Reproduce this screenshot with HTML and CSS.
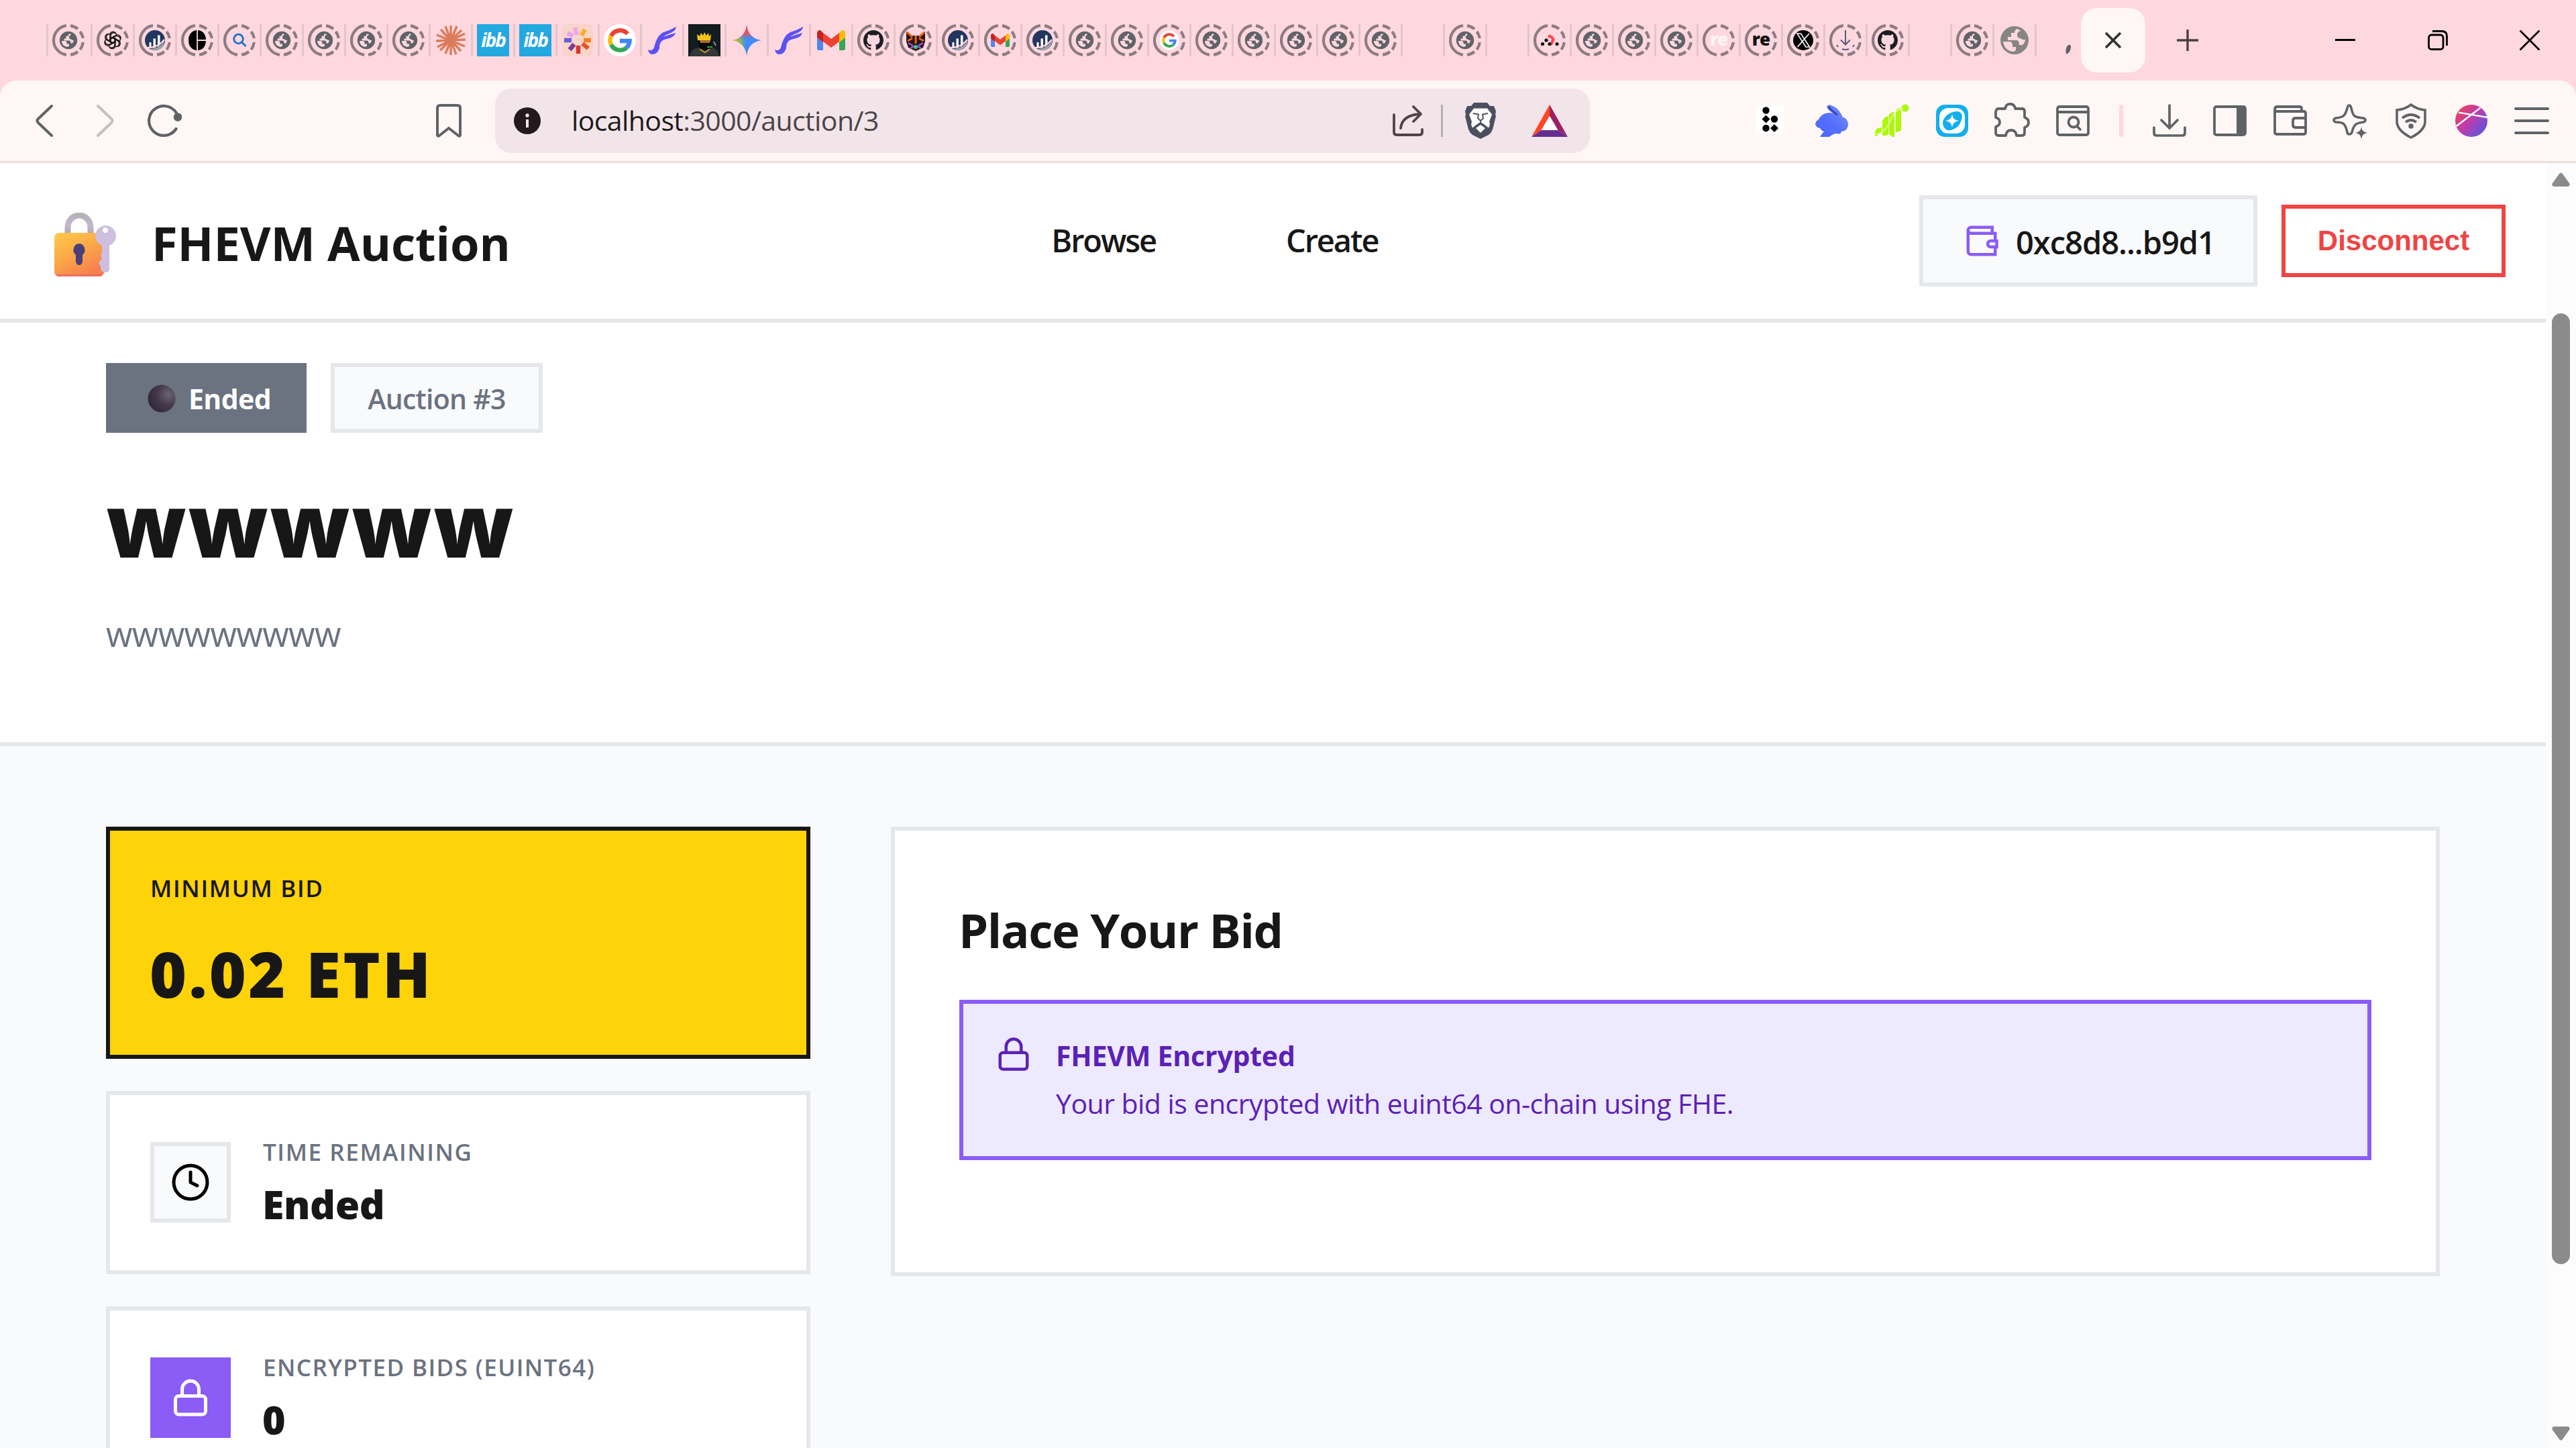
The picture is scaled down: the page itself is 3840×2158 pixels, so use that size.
FILE: index.html
```html
<!DOCTYPE html>
<html lang="en">
<head>
<meta charset="utf-8">
<title>FHEVM Auction</title>
<link rel="stylesheet" href="styles.css">
</head>
<body>
<svg class="defs" width="0" height="0" aria-hidden="true">
  <defs>
    <linearGradient id="lockBody" x1="0" y1="0" x2=".6" y2="1"><stop offset="0" stop-color="#ffcb4d"/><stop offset=".45" stop-color="#fbae46"/><stop offset="1" stop-color="#f6804f"/></linearGradient>
    <linearGradient id="shackle" x1="0" y1="0" x2="0" y2="1"><stop offset="0" stop-color="#b5b2b8"/><stop offset=".5" stop-color="#c3b8cc"/><stop offset="1" stop-color="#a9a6ac"/></linearGradient>
    <linearGradient id="gem" x1="0" y1="0" x2="1" y2="0"><stop offset="0" stop-color="#fbc02d"/><stop offset=".28" stop-color="#8fb35e"/><stop offset=".48" stop-color="#3c8df5"/><stop offset="1" stop-color="#4a8bff"/></linearGradient>
    <linearGradient id="gemTop" x1="0" y1="0" x2="0" y2="1"><stop offset="0" stop-color="#ff4641"/><stop offset=".28" stop-color="#f0505a" stop-opacity=".9"/><stop offset=".5" stop-color="#3186ff" stop-opacity="0"/><stop offset=".72" stop-color="#3186ff" stop-opacity="0"/><stop offset="1" stop-color="#14bb69"/></linearGradient>
    <linearGradient id="orbFill" x1="0" y1=".1" x2="1" y2=".9"><stop offset="0" stop-color="#f0474c"/><stop offset=".45" stop-color="#c13bab"/><stop offset="1" stop-color="#4f5ae0"/></linearGradient>
    <linearGradient id="rabbitFill" x1="0" y1="1" x2="1" y2="0"><stop offset="0" stop-color="#4c66ff"/><stop offset=".5" stop-color="#5570fb"/><stop offset="1" stop-color="#8193fb"/></linearGradient>
    <radialGradient id="moon" cx=".75" cy=".35" r=".8"><stop offset="0" stop-color="#6d6473"/><stop offset=".5" stop-color="#443a4b"/><stop offset="1" stop-color="#2f2738"/></radialGradient>
  </defs>
  <symbol id="ring" viewBox="0 0 48 48"><path d="M21 2.200A22 22 0 0 0 21 45.800M27 2.300Q33 3 38 7M41.500 11Q45 16 45.800 21M45.800 27Q45 33 41.500 38M38 41Q33 45 27 45.700" fill="none" stroke="#8d7c81" stroke-width="4.200"/></symbol>
  <symbol id="globe" viewBox="0 0 48 48"><use href="#ring"/><circle cx="24" cy="24" r="13.200" fill="#5f6368"/><path d="M13.800 25h4.700q3 0 3 3v1.500h3.500v3q-1.500 1.500-4 1.200-6.700-2-7.200-8.700zM26 14q-2.500 1-2.500 3.800h-3v3.700h-3v3h7.500q2.500 0 2.500 4h2.500q2-2.500 2-4.500-2 .5-4-1.500-3 0-3-3 0-3 3-3.500-1-1.500-2-2z" fill="#ffd7df"/></symbol>
  <symbol id="globe-plain" viewBox="0 0 48 48"><circle cx="24" cy="24" r="21" fill="#858585"/><path d="M7 26h9q5 0 5 5v3h5v5q-2 2-5 2-12-2-14-15zM27 7q-3 2-3 6h-5v6h-5v5h13q4 0 4 7h5q4-4 4-8-4 1-7-2-5 0-5-5 0-5 5-6-3-3-6-3z" fill="#ffd7df"/></symbol>
  <symbol id="gpt" viewBox="0 0 48 48"><use href="#ring"/><g fill="none" stroke="#111" stroke-width="1.400"><path id="petal" d="M21 28v-10.500a4.800 4.800 0 0 1 9-2.200M21 21l8.500-4.800a4.800 4.800 0 0 1 6 6.500"/><use href="#petal" transform="rotate(60 24 24)"/><use href="#petal" transform="rotate(120 24 24)"/><use href="#petal" transform="rotate(180 24 24)"/><use href="#petal" transform="rotate(240 24 24)"/><use href="#petal" transform="rotate(300 24 24)"/></g></symbol>
  <symbol id="chart" viewBox="0 0 48 48"><use href="#ring"/><circle cx="24" cy="24" r="15" fill="#22365f"/><path d="M15 37q16 0 23.500-13-1 14-14.500 15-5 0-9-2z" fill="#9da1a6"/><path d="M15.500 35v-8h3v8.500M21.500 36V21.500h3.500V35M28 34V16.500h3.500V31" fill="#fff"/><path d="M13 35q16 0 25-12" fill="none" stroke="#ffd7df" stroke-width="2.200"/></symbol>
  <symbol id="blackc" viewBox="0 0 48 48"><use href="#ring"/><path d="M23.200 9v30a13 13 0 0 1-12-13v-4a13 13 0 0 1 12-13zM25 9q11 1 12 14H25zM25 25h12q-1 13-12 14z" fill="#000"/></symbol>
  <symbol id="search" viewBox="0 0 48 48"><use href="#ring"/><circle cx="22.500" cy="22" r="6.800" fill="none" stroke="#1a73c8" stroke-width="2.800"/><path d="M27.500 27l6 6" stroke="#1a73c8" stroke-width="3"/></symbol>
  <symbol id="claude" viewBox="0 0 48 48"><path d="M24 2v44M2 25l44-2M9 8l30 32M40 9L8 39M16 3l16 42M33 3L16 44M3 16l42 17M45 14L4 34" stroke="#dc7b5b" stroke-width="3.400"/></symbol>
  <symbol id="swirl" viewBox="0 0 48 48"><rect x="1" width="46" height="48" rx="8" fill="#f7d5c8"/><g stroke-width="6.500"><path d="M23 16l-3-11" stroke="#f2a6e8"/><path d="M30 17l5-9" stroke="#fbae2c"/><path d="M33 24h11" stroke="#f58220"/><path d="M31 29l9 7" stroke="#e8542c"/><path d="M25 32v12" stroke="#d7372f"/><path d="M19 30l-7 8" stroke="#7d3c91"/><path d="M15 24H4" stroke="#6a5ae0"/><path d="M17 18l-8-5" stroke="#e9a0f0"/></g></symbol>
  <symbol id="gmark" viewBox="0 0 48 48"><g fill="none" stroke-width="6.500"><path d="M35.500 14.500A14.800 14.800 0 0 0 11 17.500" stroke="#ea4335"/><path d="M11 17.500a14.800 14.800 0 0 0 0 13" stroke="#fbbc05"/><path d="M11 30.500a14.800 14.800 0 0 0 22.500 5" stroke="#34a853"/><path d="M33.500 35.500A14.800 14.800 0 0 0 38.500 25H24" stroke="#4285f4"/></g></symbol>
  <symbol id="google" viewBox="0 0 48 48"><circle cx="24" cy="24" r="24" fill="#fff"/><use href="#gmark"/></symbol>
  <symbol id="google-ring" viewBox="0 0 48 48"><use href="#ring"/><use href="#google" x="9.500" y="9.500" width="29" height="29"/></symbol>
  <symbol id="flame" viewBox="0 0 48 48"><path d="M3 38q6 3 9-3 4-18 14-23Q36 9 45 4q0 5-8 9-8 3-11 6 10-4 18-6-1 5-9 8-6 1-10 3-5 3-5 12Q17 45 9 45q-5-1-6-7z" fill="#5b52f0"/></symbol>
  <symbol id="avatar" viewBox="0 0 48 48"><path d="M0 0h48v48H0z" fill="#131c1f"/><path d="M2 48q2-12 14-13l8 4 8-5q13 2 14 14z" fill="#34383a"/><path d="M14 24h20v12l-8 7-9-6z" fill="#08090a"/><path d="M17 24h16l-1 4H18z" fill="#a9683c"/><path d="M13 15l4 3 2-5 3 4 2-5 3 5 3-4 1 5 3-3-1 9H14z" fill="#f5c518"/><path d="M17 37l8 5 7-5" fill="none" stroke="#c9a42c" stroke-width="2"/><path d="M28 34h8" stroke="#35a04a" stroke-width="2"/><path d="M38 26l3 6" stroke="#8d9396" stroke-width="2"/></symbol>
  <symbol id="gemini" viewBox="0 0 48 48"><path d="M24 2q3 19 22 22-19 3-22 22Q21 27 2 24 21 21 24 2z" fill="url(#gem)"/><path d="M24 2q3 19 22 22-19 3-22 22Q21 27 2 24 21 21 24 2z" fill="url(#gemTop)"/></symbol>
  <symbol id="gmailmark" viewBox="0 0 48 48"><path d="M3 13v23q0 3 3 3h6V20z" fill="#4f86f0"/><path d="M45 13v23q0 3-3 3h-6V20z" fill="#34a853"/><path d="M36 13l4-4q5 0 5 5v6l-9 7z" fill="#fbbc04"/><path d="M12 13L8 9q-5 0-5 5v6l9 7z" fill="#c5221f"/><path d="M12 13l12 9 12-9v13l-12 9-12-9z" fill="#ea4335"/></symbol>
  <symbol id="gmail-ring" viewBox="0 0 48 48"><use href="#ring"/><use href="#gmailmark" x="8" y="8" width="32" height="32"/></symbol>
  <symbol id="github" viewBox="0 0 48 48"><use href="#ring"/><path transform="translate(9 9) scale(1.875)" fill="#1b1f23" d="M8 0C3.580 0 0 3.580 0 8c0 3.540 2.290 6.530 5.470 7.590.400.070.550-.170.550-.380 0-.190-.010-.820-.010-1.490-2.010.370-2.530-.490-2.690-.940-.090-.230-.480-.940-.820-1.130-.280-.150-.680-.520-.010-.530.630-.010 1.080.580 1.230.820.720 1.210 1.870.870 2.330.660.070-.520.280-.870.510-1.070-1.780-.200-3.640-.890-3.640-3.950 0-.870.310-1.590.820-2.150-.080-.200-.360-1.020.080-2.120 0 0 .670-.210 2.200.820.640-.180 1.320-.270 2-.270s1.360.090 2 .270c1.530-1.040 2.200-.820 2.200-.820.440 1.100.160 1.920.080 2.120.510.560.820 1.270.820 2.150 0 3.070-1.870 3.750-3.650 3.950.290.250.540.730.540 1.480 0 1.070-.010 1.930-.010 2.200 0 .210.150.460.550.380A8.010 8.010 0 0 0 16 8c0-4.420-3.580-8-8-8z"/></symbol>
  <symbol id="fox" viewBox="0 0 48 48"><use href="#ring"/><path d="M10 11l8 6h12l8-6v15l-3 9-11 5-11-5-3-9z" fill="#27151c"/><path d="M11 12l8 7M37 12l-8 7M19 21l-7 4M29 21l7 4M24 17v12" stroke="#e8641b" stroke-width="3"/><path d="M13 28l7 4M35 28l-7 4M16 36l5-3M32 36l-5-3" stroke="#a457e0" stroke-width="2.200"/><circle cx="24" cy="34" r="3" fill="#4bbf8a"/></symbol>
  <symbol id="dots" viewBox="0 0 48 48"><use href="#ring"/><path d="M23 17h5l4 6-4 8h-4l3-8z" fill="#ff4757"/><circle cx="24" cy="18" r="2.500" fill="#ff4757"/><g fill="#111"><circle cx="19" cy="24" r="2.600"/><circle cx="13.500" cy="29.500" r="2.600"/><circle cx="24" cy="29.500" r="2.600"/><circle cx="35" cy="29.500" r="2.600"/></g></symbol>
  <symbol id="xlogo" viewBox="0 0 48 48"><use href="#ring"/><circle cx="24" cy="24" r="15" fill="#000"/><path d="M15 14h5.500l13 20H28zM33 14L15.500 34" fill="none" stroke="#fff" stroke-width="1.600"/></symbol>
  <symbol id="downring" viewBox="0 0 48 48"><use href="#ring"/><path d="M24 9v21M17 23.500l7 7 7-7M19 37q5 2 10 0M11 31l2 3M37 31l-2 3" fill="none" stroke="#56597a" stroke-width="2"/></symbol>
  <symbol id="lock" viewBox="0 0 24 24"><g fill="none" stroke="currentColor" stroke-width="2" stroke-linecap="round" stroke-linejoin="round"><rect x="3" y="11" width="18" height="11" rx="2"/><path d="M7 11V7a5 5 0 0 1 10 0v4"/></g></symbol>
</svg>

<div class="tabstrip">
  <div class="slot slot-first"><svg><use href="#globe"/></svg></div>
  <div class="slot"><svg><use href="#gpt"/></svg></div>
  <div class="slot"><svg><use href="#chart"/></svg></div>
  <div class="slot"><svg><use href="#blackc"/></svg></div>
  <div class="slot"><svg><use href="#search"/></svg></div>
  <div class="slot"><svg><use href="#globe"/></svg></div>
  <div class="slot"><svg><use href="#globe"/></svg></div>
  <div class="slot"><svg><use href="#globe"/></svg></div>
  <div class="slot"><svg><use href="#globe"/></svg></div>
  <div class="slot"><svg><use href="#claude"/></svg></div>
  <div class="slot"><div class="ibb">ibb</div></div>
  <div class="slot"><div class="ibb">ibb</div></div>
  <div class="slot"><svg><use href="#swirl"/></svg></div>
  <div class="slot"><svg><use href="#google"/></svg></div>
  <div class="slot"><svg><use href="#flame"/></svg></div>
  <div class="slot"><svg><use href="#avatar"/></svg></div>
  <div class="slot"><svg><use href="#gemini"/></svg></div>
  <div class="slot"><svg><use href="#flame"/></svg></div>
  <div class="slot"><svg><use href="#gmailmark"/></svg></div>
  <div class="slot"><svg><use href="#github"/></svg></div>
  <div class="slot"><svg><use href="#fox"/></svg></div>
  <div class="slot"><svg><use href="#chart"/></svg></div>
  <div class="slot"><svg><use href="#gmail-ring"/></svg></div>
  <div class="slot"><svg><use href="#chart"/></svg></div>
  <div class="slot"><svg><use href="#globe"/></svg></div>
  <div class="slot"><svg><use href="#globe"/></svg></div>
  <div class="slot"><svg><use href="#google-ring"/></svg></div>
  <div class="slot"><svg><use href="#globe"/></svg></div>
  <div class="slot"><svg><use href="#globe"/></svg></div>
  <div class="slot"><svg><use href="#globe"/></svg></div>
  <div class="slot"><svg><use href="#globe"/></svg></div>
  <div class="slot"><svg><use href="#globe"/></svg></div>
  <div class="slot"></div>
  <div class="slot"><svg><use href="#globe"/></svg></div>
  <div class="slot"></div>
  <div class="slot"><svg><use href="#dots"/></svg></div>
  <div class="slot"><svg><use href="#globe"/></svg></div>
  <div class="slot"><svg><use href="#globe"/></svg></div>
  <div class="slot"><svg><use href="#globe"/></svg></div>
  <div class="slot"><div class="re re-light"><svg><use href="#ring"/></svg><span>re</span></div></div>
  <div class="slot"><div class="re"><svg><use href="#ring"/></svg><span>re</span></div></div>
  <div class="slot"><svg><use href="#xlogo"/></svg></div>
  <div class="slot"><svg><use href="#downring"/></svg></div>
  <div class="slot"><svg><use href="#github"/></svg></div>
  <div class="slot"></div>
  <div class="slot"><svg><use href="#globe"/></svg></div>
  <div class="slot"><svg><use href="#globe-plain"/></svg></div>
  <div class="slot"><svg viewBox="0 0 48 48"><path d="M38 36q2-6 6-5 2 2 0 8-3 6-6 5-1-3 0-8z" fill="#5f6368"/></svg></div>
  <div class="tab-active"><svg viewBox="0 0 24 24"><path d="M1 1l22 22M23 1L1 23" stroke="#2f3134" stroke-width="3.600"/></svg></div>
  <svg class="tab-new" viewBox="0 0 32 32"><path d="M16 0v32M0 16h32" stroke="#4a4044" stroke-width="3.400"/></svg>
  <div class="winbtns">
    <div class="winbtn"><svg viewBox="0 0 30 30"><path d="M0 14.500h30" stroke="#000" stroke-width="3"/></svg></div>
    <div class="winbtn"><svg viewBox="0 0 30 30"><g fill="none" stroke="#000" stroke-width="2.800"><rect x="1.500" y="7" width="21.500" height="21.500" rx="4"/><path d="M7 1.500h14q7.500 0 7.500 7.500v14"/></g></svg></div>
    <div class="winbtn"><svg viewBox="0 0 30 30"><path d="M.500.500l29 29M29.500.500l-29 29" stroke="#000" stroke-width="2.800"/></svg></div>
  </div>
</div>

<div class="toolbar">
  <div class="tool"><svg viewBox="0 0 54 54"><path d="M38 5L18 24q-3 3 0 6l20 19" fill="none" stroke="#5f6368" stroke-width="4" stroke-linecap="round"/></svg></div>
  <div class="tool"><svg viewBox="0 0 54 54"><path d="M17 5l20 19q3 3 0 6L17 49" fill="none" stroke="#c3c0c1" stroke-width="4" stroke-linecap="round"/></svg></div>
  <div class="tool"><svg viewBox="0 0 54 54"><path d="M43.500 39A22 22 0 1 1 46 20" fill="none" stroke="#5f6368" stroke-width="4.200" stroke-linecap="round"/><circle cx="46" cy="21.500" r="6.300" fill="#5f6368"/></svg></div>
  <div class="tool tool-bookmark"><svg viewBox="0 0 54 54"><path d="M14 4h26q4 0 4 4v40q0 3-3 1L27 38 13 49q-3 2-3-1V8q0-4 4-4z" fill="none" stroke="#5f6368" stroke-width="4"/></svg></div>
  <div class="urlbar">
    <svg class="url-info" viewBox="0 0 40 40"><circle cx="20" cy="20" r="20" fill="#231a1c"/><circle cx="20" cy="12" r="2.700" fill="#f2e5ea"/><path d="M20 18v12" stroke="#f2e5ea" stroke-width="4"/></svg>
    <span class="url-text"><span class="url-host">localhost</span>:3000/auction/3</span>
    <svg class="url-share" viewBox="0 0 46 46"><path d="M2 14v26q0 4 4 4h34q4 0 4-4v-4M12 34q2-20 30-21M31 2l11 11-11 11" fill="none" stroke="#524347" stroke-width="3.800" stroke-linecap="round" stroke-linejoin="round"/></svg>
    <span class="url-sep"></span>
    <svg class="url-brave" viewBox="0 0 48 54"><path d="M14 0h20l4 5h6l3 8-1 5 1 2-5 20q-2 5-6 8l-12 6-12-6q-4-3-6-8L1 20l1-2-1-5 3-8h6z" fill="#4c4f60"/><path d="M14 8.500h20l7 9-4 11q2 4-1 9l-7-5.500-5-3-5 3-7 5.500q-3-5-1-9l-4-11z" fill="#fff"/><path d="M24 33l7 5-7 7-7-7z" fill="#fff"/><path d="M13 16l8 1.500-1 6 4 3.500 4-3.500-1-6 8-1.500M24 27v3.500l-6 4M24 30.500l6 4" fill="none" stroke="#4c4f60" stroke-width="1.900"/></svg>
    <svg class="url-bat" viewBox="0 0 54 48"><path d="M27 0L0 48l14.500-10L27 17z" fill="#ff4724"/><path d="M27 0l27 48-14.500-10L27 17z" fill="#9e1f63"/><path d="M0 48h54L39.500 38h-25z" fill="#662d91"/><path d="M27 17l12.500 21h-25z" fill="#fff"/></svg>
  </div>
  <div class="tools">
    <div class="tool"><svg viewBox="0 0 54 54"><rect x="5" y="4" width="42" height="42" rx="6" fill="#fff"/><g fill="#000"><circle cx="19.500" cy="11.500" r="5.200"/><path d="M19.500 18.500l6 6-6 6-6-6z"/><circle cx="32" cy="24.500" r="5.200"/><circle cx="19.500" cy="38" r="5.200"/><path d="M32 32l6 6-6 6-6-6z"/></g></svg></div>
    <div class="tool"><svg viewBox="0 0 54 54"><path d="M20 6q2-4 7-2 9 3 14 12 3 4 2 5 8 2 9 11 0 10-10 11-1 5-7 3-5 0-11 5H10q3-5 6-8-4-1-6-5-6-1-7-6 1-5 5-7 5-10 16-10 5 0 9 2-11-4-13-11z" fill="url(#rabbitFill)"/><path d="M23 6q5 7 13 12" stroke="#2f42b8" stroke-width="3" fill="none"/></svg></div>
    <div class="tool"><svg viewBox="0 0 54 54"><g fill="#acf806"><path d="M2 50v-6q1-7 10-7v6l-7 7zM13 27q3-6 9-7v27q-3 3-9 2z"/><path d="M23 18q3-4 8-4v37h-3l-5-4zM33 11q3-3 8-3v33q-3 3-8 3z"/><circle cx="47" cy="8" r="5.500"/></g><path d="M3 48q17-5 24-26 5-12 17-13" fill="none" stroke="#e9ffb5" stroke-width="1.500"/></svg></div>
    <div class="tool"><svg viewBox="0 0 54 54"><rect x="3" y="3" width="48" height="48" rx="13" fill="#12aeef"/><rect x="8" y="8" width="38" height="38" rx="13" fill="#fff"/><path d="M15 37q-5-8 2-16t18-8q6 1 7 7-1 9-6 15-8 7-16 6-3-1-5-4z" fill="#12aeef"/><path d="M27 17q1 9 10 10-9 1-10 10-1-9-10-10 9-1 10-10z" fill="#fff"/></svg></div>
    <div class="tool"><svg viewBox="0 0 54 54"><path d="M6 9h10q1-7 7.500-7T31 9h10q4 0 4 4v9q6 2 6 7.500t-6 7.500v8q0 4-4 4h-8q-1-8-8-8t-8 8H6q-4 0-4-4v-9q6-2 6-7t-6-7v-7q0-6 4-6z" fill="none" stroke="#5f6368" stroke-width="3.800" stroke-linejoin="round"/></svg></div>
    <div class="tool"><svg viewBox="0 0 54 54"><g fill="none" stroke="#5f6368" stroke-width="3.800"><rect x="4" y="6" width="46" height="42" rx="3"/><path d="M4 14h46"/><circle cx="28" cy="29" r="7.500"/><path d="M33 35l6 6"/></g></svg></div>
    <span class="tool-sep"></span>
    <div class="tool"><svg viewBox="0 0 54 54"><path d="M4 37v8q0 4 4 4h38q4 0 4-4v-8M27 4v33M15 26l12 12 12-12" fill="none" stroke="#5f6368" stroke-width="3.700" stroke-linecap="round"/></svg></div>
    <div class="tool"><svg viewBox="0 0 54 54"><rect x="4" y="6" width="46" height="42" rx="3" fill="none" stroke="#5f6368" stroke-width="3.800"/><path d="M37 5h12v44H37z" fill="#5f6368"/></svg></div>
    <div class="tool"><svg viewBox="0 0 54 54"><g fill="none" stroke="#5f6368" stroke-width="3.800" stroke-linejoin="round"><path d="M4 10v34q0 3 3 3h40q3 0 3-3V16q0-3-3-3H7q-3 0-3-3 0-4 4-4h33q3 0 3 3v4"/><path d="M50 23H35q-4 0-4 4v6q0 4 4 4h15"/></g></svg></div>
    <div class="tool"><svg viewBox="0 0 54 54"><path d="M25 4q2 0 3 4 2 10 5 12t13 3q3 1 3 3t-3 3q-9 1-12 4t-5 11q-1 3-4 3t-3-3q-2-9-5-12T5 29q-3-1-3-3t3-3q9-1 12-4t5-11q1-4 3-4z" fill="none" stroke="#5f6368" stroke-width="3.600"/><path d="M43 36q1 8 9 9-8 1-9 9-1-8-9-9 8-1 9-9z" fill="#5f6368"/></svg></div>
    <div class="tool"><svg viewBox="0 0 54 54"><path d="M27 3q9 7 21 8v18q-1 13-21 23Q7 42 6 29V11q12-1 21-8z" fill="none" stroke="#5f6368" stroke-width="3.600"/><path d="M14 23q13-10 26 0M19 29q8-6 16 0" fill="none" stroke="#5f6368" stroke-width="4"/><circle cx="27" cy="35" r="3.800" fill="#5f6368"/></svg></div>
    <div class="tool"><svg viewBox="0 0 54 54"><circle cx="27" cy="27" r="24" fill="url(#orbFill)"/><path d="M4 33L42 9M9 13l42 11" stroke="#fff" stroke-width="2.400" transform="rotate(-5 27 27)"/></svg></div>
    <div class="tool"><svg viewBox="0 0 54 54"><path d="M3 9h48M3 27h48M3 45h48" stroke="#5f6368" stroke-width="4" stroke-linecap="round"/></svg></div>
  </div>
</div>

<div class="viewport">
  <div class="page">
    <header class="header">
      <div class="brand">
        <svg class="brand-icon" viewBox="0 0 93 96">
          <path d="M20 34V22a17 18 0 0 1 34 0v12" fill="none" stroke="url(#shackle)" stroke-width="9"/>
          <rect x="0" y="30" width="74" height="65" rx="7" fill="url(#lockBody)"/>
          <path d="M2 92h66q4 0 5-5v2q-1 6-6 6H7q-4 0-5-3z" fill="#ee6f5e"/>
          <path d="M37 46a9 9.500 0 0 1 5 17v10q-1 5-5 5t-5-5V63a9 9.500 0 0 1 5-17z" fill="#4b3f78"/>
          <path d="M66 74l5-5-2-6 2-4V49a15.500 15.500 0 1 1 11 0v36q-1 4-6 4-8-1-7-8z" fill="#cdbfdd"/>
          <circle cx="76" cy="26" r="4" fill="#fff"/>
        </svg>
        <span class="brand-name">FHEVM Auction</span>
      </div>
      <nav class="nav"><a>Browse</a><a>Create</a></nav>
      <div class="account">
        <div class="wallet">
          <svg viewBox="0 0 24 24"><g fill="none" stroke="#8b5cf6" stroke-width="2"><path d="M21 12V7H5a2 2 0 0 1 0-4h14v4"/><path d="M3 5v14a2 2 0 0 0 2 2h16v-5"/><path d="M18 12a2 2 0 0 0 0 4h4v-4Z"/></g></svg>
          <span>0xc8d8...b9d1</span>
        </div>
        <button class="disconnect">Disconnect</button>
      </div>
    </header>

    <section class="hero">
      <div class="badges">
        <div class="badge-ended"><svg viewBox="0 0 42 42"><circle cx="21" cy="21" r="20.500" fill="url(#moon)"/></svg><span>Ended</span></div>
        <div class="badge-id">Auction #3</div>
      </div>
      <h1 class="title">wwwww</h1>
      <p class="desc">wwwwwwwww</p>
    </section>

    <main class="content">
      <aside class="stats">
        <div class="card-min">
          <div class="label label-dark">MINIMUM BID</div>
          <div class="min-value">0.02 ETH</div>
        </div>
        <div class="stat">
          <div class="stat-icon"><svg viewBox="0 0 24 24"><g fill="none" stroke="#000" stroke-width="2" stroke-linecap="round" stroke-linejoin="round"><circle cx="12" cy="12" r="10"/><path d="M12 6v6l4 2"/></g></svg></div>
          <div><div class="label label-time">TIME REMAINING</div><div class="stat-value">Ended</div></div>
        </div>
        <div class="stat">
          <div class="stat-icon stat-icon-violet"><svg><use href="#lock"/></svg></div>
          <div><div class="label">ENCRYPTED BIDS (EUINT64)</div><div class="stat-value">0</div></div>
        </div>
      </aside>
      <section class="bid">
        <h2 class="bid-title">Place Your Bid</h2>
        <div class="notice">
          <svg><use href="#lock"/></svg>
          <div><div class="notice-title">FHEVM Encrypted</div><div class="notice-text">Your bid is encrypted with euint64 on-chain using FHE.</div></div>
        </div>
      </section>
    </main>
  </div>
  <div class="scrollbar">
    <svg viewBox="0 0 27 21"><path d="M11 2q2.500-3 5 0l10 14q2 4-2 5H3q-4-1-2-5z" fill="#8b8b8b"/></svg>
    <div class="thumb"></div>
    <svg viewBox="0 0 27 21"><path d="M11 19q2.500 3 5 0L26 5q2-4-2-5H3q-4 1-2 5z" fill="#8b8b8b"/></svg>
  </div>
</div>
</body>
</html>
```
FILE: styles.css
```css
* { box-sizing: border-box; }
body { margin: 0; height: 2158px; overflow: hidden; display: flex; flex-direction: column; font-family: "Open Sans", "Noto Sans", sans-serif; color: #171717; background: #ffd7df; }
svg { display: block; flex: none; }
.defs { position: absolute; }

/* Browser tab strip */
.tabstrip { height: 120px; flex: none; display: flex; align-items: center; padding-left: 69px; }
.slot { width: 63px; height: 48px; flex: none; padding-left: 6px; border-left: 3px solid #e2c6cb; }
.slot-first { width: 66px; }
.slot svg { width: 48px; height: 48px; }
.ibb { width: 48px; height: 48px; background: #23a8e0; color: #fff; text-align: center; font: italic 700 28px/46px "Open Sans", sans-serif; letter-spacing: -2px; }
.re { display: grid; width: 48px; height: 48px; color: #111; font: 800 26px/44px "Open Sans", sans-serif; letter-spacing: -1px; text-align: center; }
.re svg, .re span { grid-area: 1 / 1; }
.re-light { color: #fff4f6; }
.tab-active { width: 96px; height: 96px; margin-left: 6px; border-radius: 24px; background: #fff7f5; display: flex; align-items: center; justify-content: center; }
.tab-active svg { width: 24px; height: 24px; }
.tab-new { width: 32px; height: 32px; margin-left: 47px; }
.winbtns { display: flex; margin-left: auto; }
.winbtn { width: 137.5px; display: flex; justify-content: center; }
.winbtn svg { width: 30px; height: 30px; }

/* Browser toolbar */
.toolbar { height: 123px; flex: none; display: flex; align-items: center; padding-left: 21px; background: #fff7f5; border-bottom: 3px solid #ecdddf; border-radius: 24px 24px 0 0; }
.tool { width: 90px; flex: none; display: flex; justify-content: center; }
.tool svg { width: 54px; height: 54px; overflow: visible; }
.tool-bookmark { margin-left: 333px; }
.urlbar { width: 1632px; height: 96px; margin-left: 24px; padding: 0 33px 0 28px; display: flex; align-items: center; border-radius: 24px; background: #f2e5ea; }
.url-info { width: 40px; height: 40px; }
.url-text { margin-left: 46px; font-size: 41px; letter-spacing: -.6px; line-height: 60px; padding-bottom: 2px; color: #4d4446; }
.url-host { color: #1f1a1b; }
.url-share { width: 46px; height: 46px; margin-left: auto; }
.url-sep { width: 3px; height: 48px; margin: 0 32px 0 26px; background: #b4b0b5; }
.url-brave { width: 48px; height: 54px; }
.url-bat { width: 54px; height: 48px; margin-left: 52px; }
.tools { display: flex; align-items: center; margin-left: 225px; }
.tool-sep { width: 6px; height: 48px; margin: 0 24px; border-radius: 3px; background: #ffd7df; }

/* Page viewport */
.viewport { flex: 1; min-height: 0; display: flex; background: #fff; }
.page { width: 3795px; overflow: hidden; background: #f9fafc; }
.scrollbar { width: 45px; padding: 14px 9px 11px; background: #fcfcfc; display: flex; flex-direction: column; justify-content: space-between; }
.scrollbar svg { width: 27px; height: 21px; }
.thumb { height: 1417px; margin-bottom: 53px; border-radius: 14px; background: #8b8b8b; }

.header { height: 238px; display: flex; justify-content: space-between; align-items: center; padding: 0 60px 0 81px; background: #fff; border-bottom: 6px solid #e5e7eb; }
.brand { display: flex; align-items: center; }
.brand-icon { width: 93px; height: 96px; margin: 12px 52px 0 0; }
.brand-name { font-size: 70.500px; font-weight: 700; line-height: 96px; letter-spacing: -.1px; padding-top: 6px; }
.nav { display: flex; gap: 194px; font-size: 47px; font-weight: 600; letter-spacing: -2.100px; padding-bottom: 2px; }
.account { display: flex; align-items: center; gap: 36px; }
.wallet { width: 504px; height: 136px; padding-left: 60px; display: flex; align-items: center; gap: 24px; border: 6px solid #e5e7eb; background: #f9fafc; font-size: 47px; font-weight: 600; letter-spacing: -1px; white-space: nowrap; }
.wallet svg { width: 54px; height: 54px; }
.wallet span { padding-top: 3px; }
.disconnect { width: 334px; height: 108px; padding: 0; border: 6px solid #ef4444; background: #fff; color: #ef4444; font: 700 42px "Liberation Sans", sans-serif; }

.hero { height: 631px; padding: 60px 158px 0; background: #fff; border-bottom: 6px solid #e5e7eb; }
.badges { display: flex; gap: 36px; font-size: 41px; height: 104px; }
.badge-ended { width: 299px; padding: 2px 0 0 62px; display: flex; align-items: center; gap: 19px; background: #6b7280; color: #fff; font-weight: 700; letter-spacing: -.6px; }
.badge-ended svg { width: 42px; height: 42px; }
.badge-id { width: 316px; display: flex; align-items: center; justify-content: center; border: 6px solid #e5e7eb; background: #f9fafc; color: #6b7280; font-weight: 600; letter-spacing: -.75px; padding-top: 2px; }
.title { margin: 56px 0 0; font: 900 132px/158px "Noto Sans", sans-serif; letter-spacing: 1.800px; }
.desc { margin: 42px 0 0; font-size: 51px; line-height: 86px; letter-spacing: -.65px; color: #6b7280; }

.content { display: grid; grid-template-columns: 1050px 2309px; gap: 120px; padding: 120px 158px; align-items: start; }
.stats { display: flex; flex-direction: column; gap: 48px; }
.card-min { height: 346px; padding: 60px; border: 6px solid #171717; background: #ffd309; }
.label { font-size: 35px; font-weight: 600; line-height: 51px; letter-spacing: 1.420px; color: #6b7280; }
.label-dark { color: #171717; letter-spacing: 1.700px; }
.label-time { letter-spacing: 1.600px; }
.min-value { margin: 41px 0 0 -1px; font: 900 94px/122px "Noto Sans", sans-serif; letter-spacing: 3.300px; }
.stat { height: 273px; padding: 0 60px 1px; display: flex; align-items: center; gap: 48px; border: 6px solid #e5e7eb; background: #fff; }
.stat-icon { width: 120px; height: 120px; display: flex; align-items: center; justify-content: center; border: 6px solid #e5e7eb; background: #f9fafc; }
.stat-icon svg { width: 60px; height: 60px; }
.stat-icon-violet { border-color: #8b5cf6; background: #8b5cf6; color: #fff; }
.stat-value { margin: 13px 0 0 -1px; font: 900 59px/78px "Noto Sans", sans-serif; letter-spacing: -.4px; }

.bid { height: 670px; padding: 96px; border: 6px solid #e5e7eb; background: #fff; }
.bid-title { margin: 2px 0 53px -1px; font-size: 70.500px; font-weight: 700; line-height: 101px; letter-spacing: -1.400px; }
.notice { height: 239px; padding: 48px; display: flex; gap: 36px; border: 6px solid #8b5cf6; background: #ede9fe; color: #5b21b6; }
.notice svg { width: 54px; height: 54px; }
.notice-title { font-size: 41px; font-weight: 700; line-height: 58px; letter-spacing: -.2px; }
.notice-text { margin-top: 11px; font-size: 41px; line-height: 62px; letter-spacing: -.530px; }
```
